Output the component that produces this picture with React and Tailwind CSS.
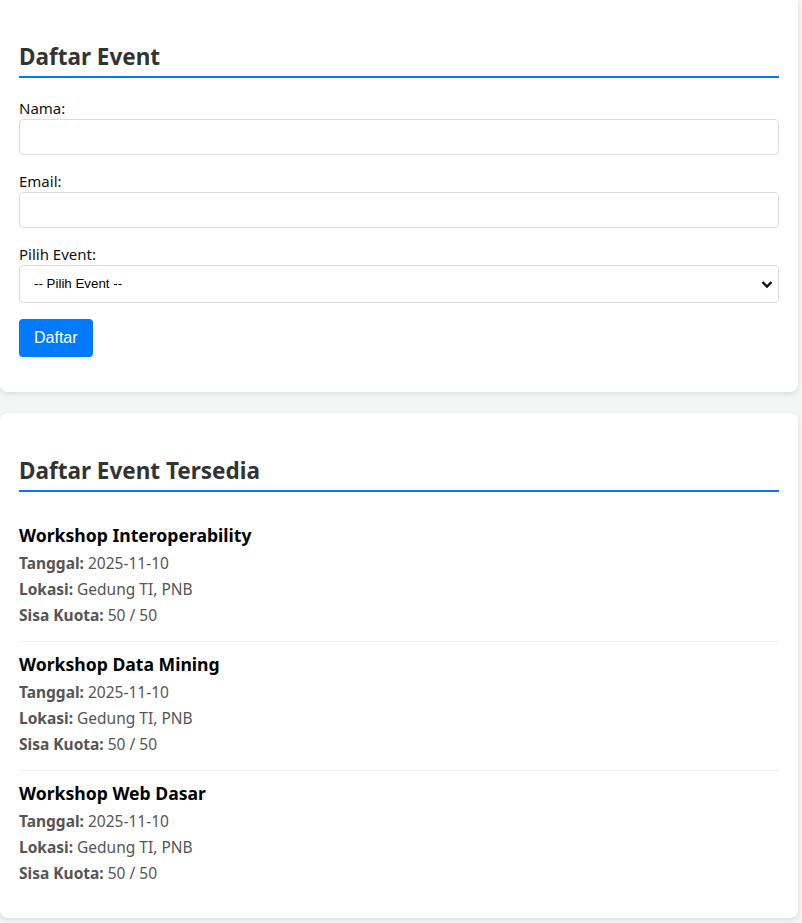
import React from "react";

const events = [
  { name: "Workshop Interoperability", date: "2025-11-10", place: "Gedung TI, PNB", quota: "50 / 50" },
  { name: "Workshop Data Mining", date: "2025-11-10", place: "Gedung TI, PNB", quota: "50 / 50" },
  { name: "Workshop Web Dasar", date: "2025-11-10", place: "Gedung TI, PNB", quota: "50 / 50" },
];

const font = { fontFamily: '"Noto Sans", "Open Sans", sans-serif' };

const Field = ({ label, children }) => (
  <div className="flex flex-col mb-[16px]">
    <label className="text-[15px] leading-[21px] text-[#111]">{label}</label>
    {children}
  </div>
);

export default function App() {
  return (
    <div className="min-h-screen bg-[#f4f5f5] pr-[4px] pb-[5px] text-[#111]" style={font}>
      <div className="bg-white rounded-b-lg shadow-[0_2px_5px_rgba(0,0,0,0.1)] px-[19px] pt-[41px] pb-[35px]">
        <h2 className="text-[22.5px] leading-[32px] font-bold text-[#333] pb-[3px] border-b-2 border-[#007bff] mb-[20px]">
          Daftar Event
        </h2>
        <form onSubmit={(e) => e.preventDefault()}>
          <Field label="Nama:">
            <input className="h-[36px] w-full border border-[#ddd] rounded-[4px] px-[10px] outline-none" />
          </Field>
          <Field label="Email:">
            <input className="h-[36px] w-full border border-[#ddd] rounded-[4px] px-[10px] outline-none" />
          </Field>
          <Field label="Pilih Event:">
            <div className="relative">
              <select
                className="h-[38px] w-full appearance-none border border-[#ddd] rounded-[4px] pl-[14px] bg-white text-[13.33px] text-black outline-none"
                style={{ fontFamily: '"Liberation Sans", Arial, sans-serif' }}
                defaultValue=""
              >
                <option value="">-- Pilih Event --</option>
                {events.map((ev) => (
                  <option key={ev.name}>{ev.name}</option>
                ))}
              </select>
              <svg
                className="absolute right-[6px] top-[15px] pointer-events-none"
                width="12"
                height="9"
                viewBox="0 0 12 9"
              >
                <path d="M1.5 2 L6 6.5 L10.5 2" fill="none" stroke="#111" strokeWidth="2.4" />
              </svg>
            </div>
          </Field>
          <button
            type="submit"
            className="h-[38px] px-[15px] bg-[#007bff] text-white rounded-[4px] text-[16px]"
            style={{ fontFamily: '"Liberation Sans", Arial, sans-serif' }}
          >
            Daftar
          </button>
        </form>
      </div>

      <div className="mt-[21px] bg-white rounded-lg shadow-[0_2px_5px_rgba(0,0,0,0.1)] px-[19px] pt-[42px] pb-[19px]">
        <h2 className="text-[22.5px] leading-[32px] font-bold text-[#333] pb-[3px] border-b-2 border-[#007bff] mb-[21px]">
          Daftar Event Tersedia
        </h2>
        <div>
          {events.map((ev, i) => (
            <div
              key={ev.name}
              className={`pt-[10px] pb-[15px] flex flex-col ${i < events.length - 1 ? "border-b border-[#eee]" : ""}`}
            >
              <h3 className="text-[17.6px] leading-[24px] font-bold text-black mb-[6px]">{ev.name}</h3>
              <div className="flex flex-col gap-[5px] text-[15.5px] leading-[21px] text-[#555]">
                <p><b>Tanggal:</b> {ev.date}</p>
                <p><b>Lokasi:</b> {ev.place}</p>
                <p><b>Sisa Kuota:</b> {ev.quota}</p>
              </div>
            </div>
          ))}
        </div>
      </div>
    </div>
  );
}
